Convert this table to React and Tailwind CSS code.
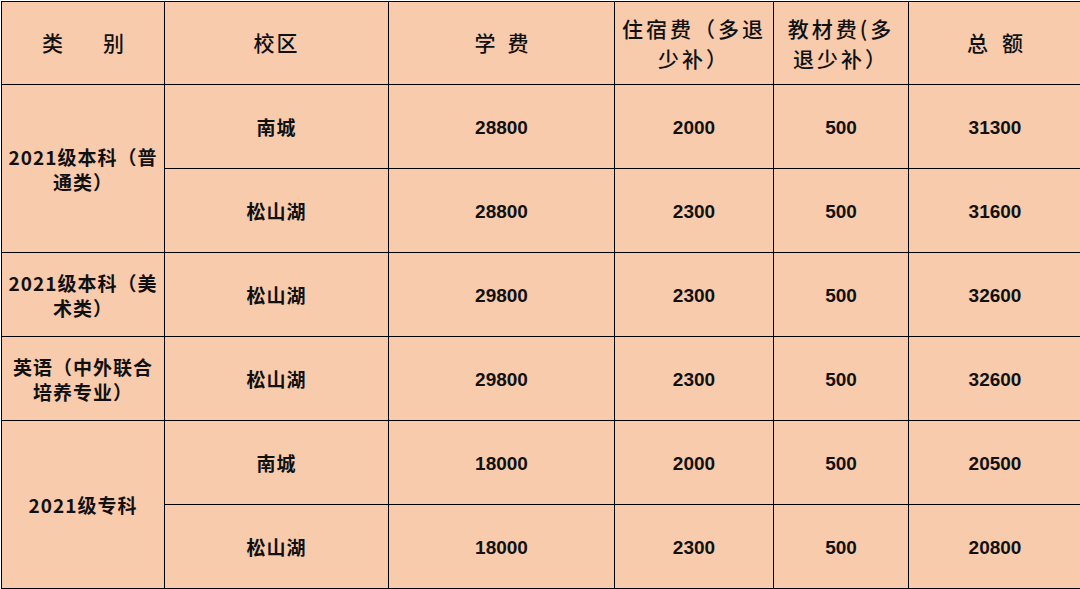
import React from "react";

const cjk = { fontFamily: '"Noto Sans CJK SC", "Noto Sans", sans-serif' };
const num = { fontFamily: '"Liberation Sans", Arial, sans-serif' };

const rows = [
  { cat: ["2021级本科（普", "通类）"], span: 2, campus: "南城", fee: "28800", dorm: "2000", book: "500", total: "31300" },
  { campus: "松山湖", fee: "28800", dorm: "2300", book: "500", total: "31600" },
  { cat: ["2021级本科（美", "术类）"], span: 1, campus: "松山湖", fee: "29800", dorm: "2300", book: "500", total: "32600" },
  { cat: ["英语（中外联合", "培养专业）"], span: 1, campus: "松山湖", fee: "29800", dorm: "2300", book: "500", total: "32600" },
  { cat: ["2021级专科"], span: 2, campus: "南城", fee: "18000", dorm: "2000", book: "500", total: "20500" },
  { campus: "松山湖", fee: "18000", dorm: "2300", book: "500", total: "20800" },
];

export default function App() {
  const td = "border border-black text-center align-middle p-0";
  return (
    <div className="w-[1080px] h-[589px] overflow-hidden bg-white">
      <table
        className="border-collapse table-fixed bg-[#f8cbad] text-[#111] mt-px ml-px"
        style={{ width: 1084 }}
      >
        <colgroup>
          <col className="w-[163px]" />
          <col className="w-[224px]" />
          <col className="w-[226px]" />
          <col className="w-[159px]" />
          <col className="w-[135px]" />
          <col className="w-[177px]" />
        </colgroup>
        <thead>
          <tr className="h-[83px]" style={cjk}>
            <th className={td + " font-medium text-[21px]"}>
              <span className="tracking-[40px] pl-[40px]">类别</span>
            </th>
            <th className={td + " font-medium text-[21px] tracking-[2px]"}>校区</th>
            <th className={td + " font-medium text-[21px]"}>
              <span className="tracking-[12px] pl-[12px]">学费</span>
            </th>
            <th className={td + " font-medium text-[21px] leading-[30px] tracking-[3px]"}>
              住宿费（多退
              <br />
              少补）
            </th>
            <th className={td + " font-medium text-[21px] leading-[30px] tracking-[3px]"}>
              教材费(多
              <br />
              退少补）
            </th>
            <th className={td + " font-medium text-[21px] pr-[4px]"}>
              <span className="tracking-[14px] pl-[14px]">总额</span>
            </th>
          </tr>
        </thead>
        <tbody>
          {rows.map((r, i) => (
            <tr key={i} className="h-[84px]">
              {r.cat && (
                <td
                  rowSpan={r.span}
                  className={td + " font-bold text-[19px] leading-[25px] tracking-[1px]"}
                  style={cjk}
                >
                  {r.cat[0]}
                  {r.cat[1] && <br />}
                  {r.cat[1]}
                </td>
              )}
              <td className={td + " font-bold text-[19px] tracking-[1px] pt-[2px]"} style={cjk}>
                {r.campus}
              </td>
              <td className={td + " font-bold text-[19px] pt-[3px]"} style={num}>{r.fee}</td>
              <td className={td + " font-bold text-[19px] pt-[3px]"} style={num}>{r.dorm}</td>
              <td className={td + " font-bold text-[19px] pt-[3px]"} style={num}>{r.book}</td>
              <td className={td + " font-bold text-[19px] pt-[3px] pr-[4px]"} style={num}>{r.total}</td>
            </tr>
          ))}
        </tbody>
      </table>
    </div>
  );
}
